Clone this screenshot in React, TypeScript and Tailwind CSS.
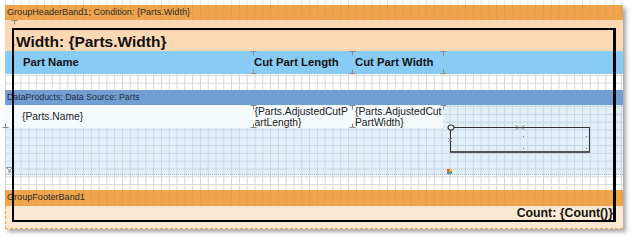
import React from "react";

function TickTop() {
  return (
    <svg className="absolute -left-[3px] top-0 pointer-events-none" width="7" height="5" viewBox="0 0 7 5">
      <path d="M0.5 0.5H6.5M3.5 0.5V4.5" stroke="#8a8a8a" strokeWidth="1" fill="none" />
    </svg>
  );
}

function TickBottom() {
  return (
    <svg className="absolute -left-[3px] bottom-0 pointer-events-none" width="7" height="5" viewBox="0 0 7 5">
      <path d="M0.5 4.5H6.5M3.5 4.5V0.5" stroke="#8a8a8a" strokeWidth="1" fill="none" />
    </svg>
  );
}

function Cell({ className, children, top = true, bottom = true }: { className: string; children?: React.ReactNode; top?: boolean; bottom?: boolean }) {
  return (
    <div className={"relative h-full " + className}>
      {top && <TickTop />}
      {bottom && <TickBottom />}
      {children}
    </div>
  );
}

export default function App() {
  return (
    <div className="w-[636px] h-[242px] bg-white relative overflow-hidden font-['Liberation_Sans',Arial,sans-serif]">
      <div className="h-[5px] ml-[5px] w-[618px] [background-image:linear-gradient(to_right,#e4e4e4_1px,transparent_1px)] [background-size:7.8px_7.8px]" />
      <div className="ml-[5px] w-[618px] flex flex-col relative shadow-[3px_3px_4px_rgba(0,0,0,0.35)]">
        {/* Group header band label */}
        <div className="h-[15px] bg-[#f0a54d] flex items-center pl-[2px] text-[9.1px] text-[#2a2a2a] [background-image:linear-gradient(to_right,rgba(0,0,0,0.05)_1px,transparent_1px)] [background-size:7.8px_7.8px]">
          GroupHeaderBand1; Condition: {"{Parts.Width}"}
        </div>
        {/* Group header content */}
        <div className="h-[31px] bg-[#fdd8b4] pl-[11px] pt-[14px] relative">
          <div className="absolute left-[6px] top-0">
            <svg width="7" height="5" viewBox="0 0 7 5">
              <path d="M0.5 0.5H6.5M3.5 0.5V4.5" stroke="#8a8a8a" strokeWidth="1" fill="none" />
            </svg>
          </div>
          <div className="text-[15.5px] leading-none font-bold text-[#111] relative">
            <span className="absolute -left-[3px] top-[10px] w-[2px] h-[2px] bg-[#7ab648]" />
            Width: {"{Parts.Width}"}
          </div>
        </div>
        {/* Column headers */}
        <div className="h-[23px] bg-[#88ccf6] flex items-center text-[11.3px] font-bold text-[#111]">
          <Cell className="w-[248px] pl-[18px] flex items-center" top={false} bottom={false}>Part Name</Cell>
          <Cell className="w-[99px] pl-[1px] flex items-center">Cut Part Length</Cell>
          <Cell className="w-[91px] pl-[3px] flex items-center">Cut Part Width</Cell>
          <Cell className="w-[153px]" />
        </div>
        {/* White grid */}
        <div className="h-[16px] bg-white [background-image:linear-gradient(to_right,#d6d6d6_1px,transparent_1px),linear-gradient(to_bottom,#d6d6d6_1px,transparent_1px)] [background-size:7.8px_7.8px] [background-position:0_0.9px]" />
        {/* Data band label */}
        <div className="h-[15px] bg-[#729fd3] flex items-center pl-[2px] text-[8.8px] text-[#1e2a3a]">
          DataProducts; Data Source: Parts
        </div>
        {/* Data band */}
        <div className="relative h-[70px] bg-[#e1eff9] border-b border-dotted border-[#8fb2d6] [background-image:linear-gradient(to_right,#c6d6e3_1px,transparent_1px),linear-gradient(to_bottom,#c6d6e3_1px,transparent_1px)] [background-size:7.8px_7.8px] [background-position:0_1.1px]">
          <div className="h-[23px] flex text-[10.3px] leading-[11px] text-[#222]">
            <Cell className="w-[248px] pl-[17px] flex items-center bg-[#f5fafd]" top={false}>
              {"{Parts.Name}"}
            </Cell>
            <Cell className="w-[99px] pl-[1.5px] pt-[1px] bg-[#f5fafd]">
              {"{Parts.AdjustedCutP"}
              <br />
              {"artLength}"}
            </Cell>
            <Cell className="w-[91px] pl-[3px] pt-[1px] bg-[#f5fafd]">
              {"{Parts.AdjustedCut"}
              <br />
              {"PartWidth}"}
            </Cell>
            <Cell className="w-[153px]" bottom={false} />
          </div>

          {/* Shape object on the band canvas */}
          <div className="absolute left-[445px] top-[22px] w-[140px] h-[26px] border-[1.5px] border-b-[2.5px] border-[#333] border-b-[#555]">
            <svg className="absolute -left-[4px] -top-[4px]" width="8" height="7" viewBox="0 0 8 7">
              <ellipse cx="4" cy="3.5" rx="3" ry="2.5" fill="#eef5fb" stroke="#333" strokeWidth="1.2" />
            </svg>
            <svg className="absolute left-[64px] -top-[3px]" width="10" height="5" viewBox="0 0 10 5">
              <path d="M0.5 0.5L4 2.5L0.5 4.5M9.5 0.5L6 2.5L9.5 4.5" stroke="#777" strokeWidth="0.8" fill="none" />
            </svg>
            <svg className="absolute -left-[4px] top-[9px]" width="6" height="6" viewBox="0 0 6 6">
              <path d="M1 1L5 5M5 1L1 5" stroke="#888" strokeWidth="0.8" />
            </svg>
            <span className="absolute left-[72px] top-[8px] w-px h-px bg-[#777]" />
            <span className="absolute left-[72px] bottom-[2px] w-px h-px bg-[#777]" />
            <span className="absolute right-[2px] top-[8px] w-px h-px bg-[#777]" />
            <span className="absolute right-[2px] bottom-[2px] w-px h-px bg-[#777]" />
          </div>
          {/* Colorful small icon */}
          <svg className="absolute left-[441px] top-[63px]" width="7" height="7" viewBox="0 0 7 7">
            <circle cx="3.5" cy="3.5" r="3" fill="#f2c94c" />
            <rect x="1" y="1" width="2.5" height="2.5" fill="#e05a47" />
            <rect x="3.5" y="3.5" width="2.5" height="2.5" fill="#4a9d4f" />
            <rect x="1" y="3.5" width="2.5" height="2.5" fill="#5a7fd0" />
          </svg>
          {/* Funnel icon */}
          <svg className="absolute left-[1px] top-[62px]" width="7" height="6" viewBox="0 0 7 6">
            <path d="M0.5 0.5H6.5L4 3V5.5H3V3Z" fill="#f4f4f4" stroke="#777" strokeWidth="0.8" />
          </svg>
        </div>
        {/* White grid */}
        <div className="h-[15px] bg-white [background-image:linear-gradient(to_right,#d6d6d6_1px,transparent_1px),linear-gradient(to_bottom,#d6d6d6_1px,transparent_1px)] [background-size:7.8px_7.8px] [background-position:0_1.3px]" />
        {/* Group footer band label */}
        <div className="h-[16px] bg-[#f0a54d] flex items-center pl-[2px] text-[9.1px] text-[#2a2a2a] [background-image:linear-gradient(to_right,rgba(0,0,0,0.05)_1px,transparent_1px)] [background-size:7.8px_7.8px]">
          GroupFooterBand1
        </div>
        {/* Group footer content */}
        <div className="h-[23px] bg-[#fbe9d5] border-l border-b border-dashed border-[#f0a54d] flex items-start justify-end pr-[10px] pt-[1px]">
          <div className="text-[12.3px] font-bold text-[#111] leading-none">Count: {"{Count()}"}</div>
        </div>

        {/* Overlay: outer black frame object */}
        <div className="absolute left-[7px] top-[23px] w-[604px] h-[194px] border-2 border-r-[3px] border-black pointer-events-none" />
      </div>
    </div>
  );
}
